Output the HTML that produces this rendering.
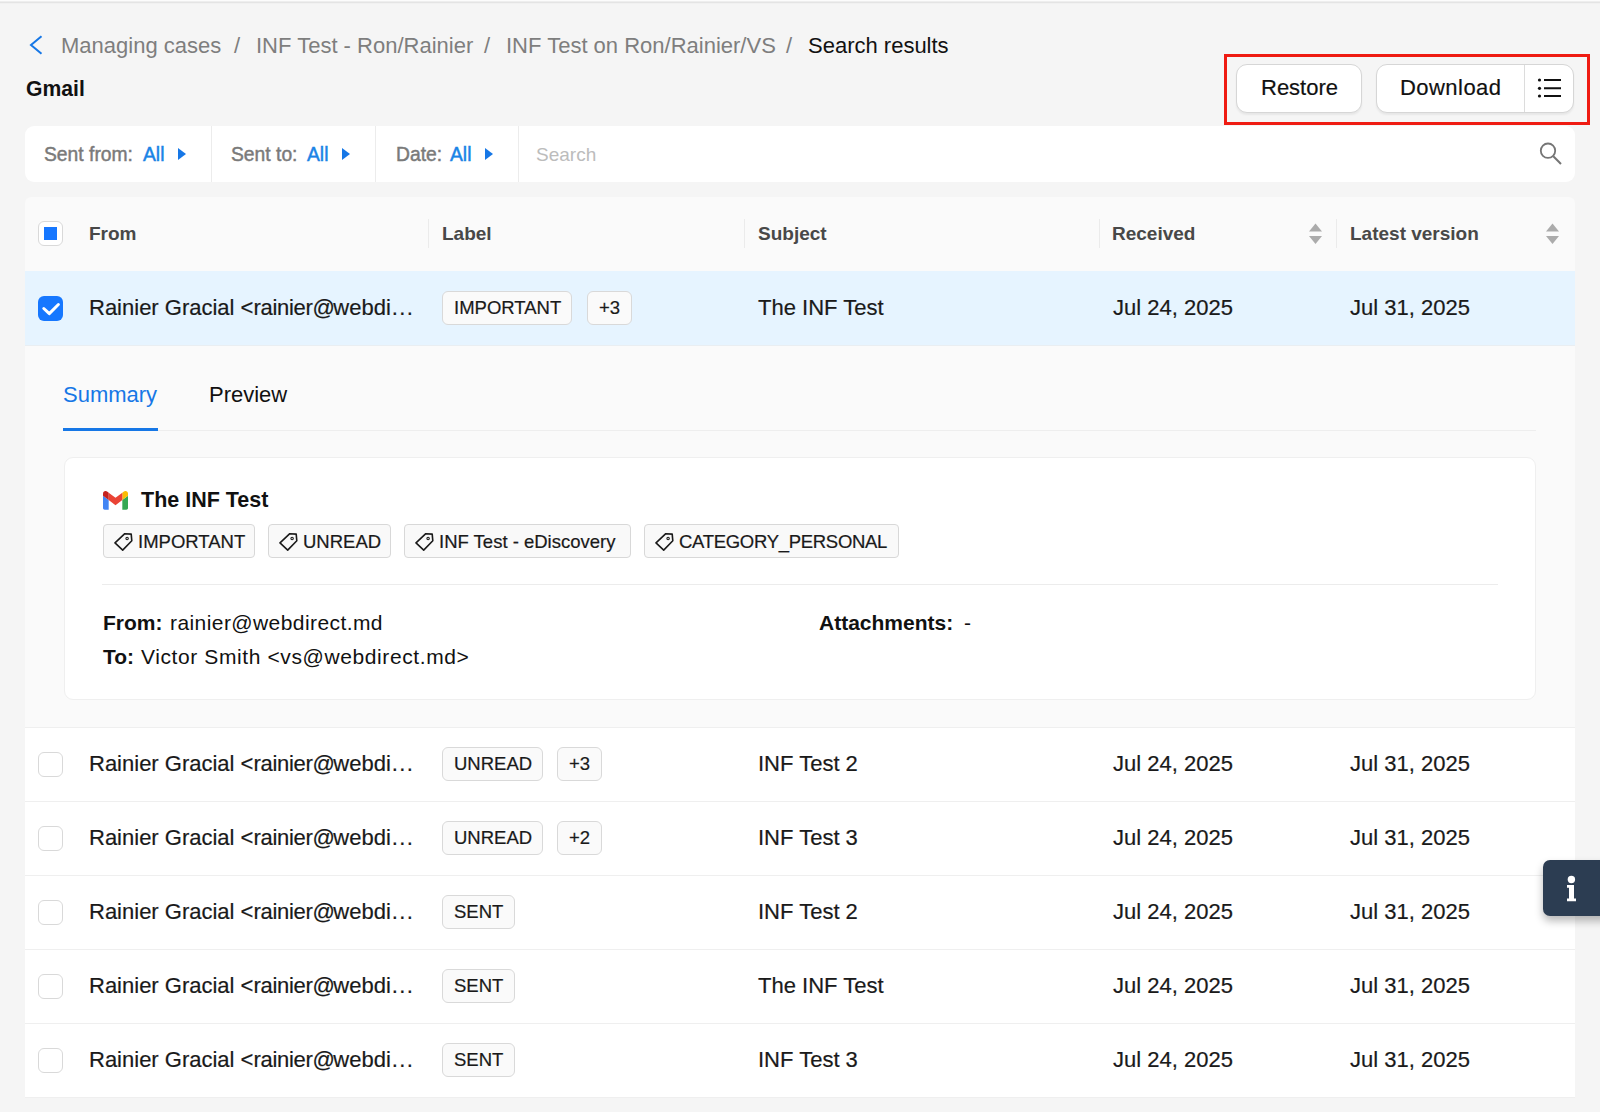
<!DOCTYPE html>
<html><head><meta charset="utf-8">
<style>
*{box-sizing:border-box;margin:0;padding:0}
html,body{width:1600px;height:1112px;overflow:hidden;background:#f5f5f5;font-family:"Liberation Sans",sans-serif;color:#1a1a1a}
.a{position:absolute;white-space:nowrap}
.topline{position:absolute;left:0;top:0;width:1600px;height:4px;background:linear-gradient(#fcfcfc 0,#fcfcfc 1px,#eeeeee 1px,#eeeeee 2px,#e4e4e4 2px,#e4e4e4 3px,#f1f1f1 3px,#f1f1f1 4px)}
.crumb{font-size:22px;line-height:22px;color:#7e7e7e}
.btn{position:absolute;background:#fff;border:1px solid #d6d6d6;border-radius:11px;box-shadow:0 2px 2px rgba(0,0,0,.06)}
.btxt{font-size:22px;line-height:22px;color:#111;-webkit-text-stroke:0.2px #111}
.redbox{position:absolute;left:1224px;top:54px;width:366px;height:71px;border:3px solid #ef1b12}
.filter{position:absolute;left:25px;top:126px;width:1550px;height:56px;background:#fff;border-radius:9px}
.fdiv{position:absolute;top:126px;width:1px;height:56px;background:#ececec}
.ftxt{font-size:19.3px;line-height:19.3px;color:#7a7a7a;-webkit-text-stroke:0.45px #7a7a7a}
.ftxt b{font-weight:normal;color:#1a84e6;-webkit-text-stroke:0.45px #1a84e6}
.tri{position:absolute;width:0;height:0;border-top:6px solid transparent;border-bottom:6px solid transparent;border-left:8px solid #1677e6}
.th{font-size:19px;line-height:19px;font-weight:bold;color:#484848}
.thdiv{position:absolute;top:219px;width:1px;height:29px;background:#ebebeb}
.rowbg{position:absolute;left:25px;width:1550px;background:#fff}
.rline{position:absolute;left:25px;width:1550px;height:1px;background:#efefef}
.cell{font-size:22px;line-height:22px;color:#1a1a1a;-webkit-text-stroke:0.2px #1a1a1a}
.tag{position:absolute;background:#fafafa;border:1px solid #d9d9d9;border-radius:6px;height:34px}
.tagt{font-size:18.5px;line-height:18.5px;color:#1a1a1a;-webkit-text-stroke:0.2px #1a1a1a}
.ctag{position:absolute;background:#f9f9f9;border:1px solid #d8d8d8;border-radius:4px;height:34px}
.cb{position:absolute;left:38px;width:25px;height:25px;border:1px solid #d9d9d9;border-radius:6px;background:#fff}
.sort{position:absolute;width:13px;height:21px}
</style></head>
<body>
<div class="topline"></div>
<svg class="a" style="left:28px;top:34px" width="16" height="22" viewBox="0 0 16 22"><path d="M13.5 2.2 L3 11 L13.5 19.8" fill="none" stroke="#1677e6" stroke-width="2"/></svg>
<div class="a crumb" style="left:61px;top:35.4px">Managing cases</div>
<div class="a crumb" style="left:234px;top:35.4px">/</div>
<div class="a crumb" style="left:256px;top:35.4px">INF Test - Ron/Rainier</div>
<div class="a crumb" style="left:484px;top:35.4px">/</div>
<div class="a crumb" style="left:506px;top:35.4px">INF Test on Ron/Rainier/VS</div>
<div class="a crumb" style="left:786px;top:35.4px">/</div>
<div class="a crumb" style="left:808px;top:35.4px;color:#111">Search results</div>
<div class="a" style="left:26px;top:77.7px;font-size:22.5px;line-height:22.5px;font-weight:bold;color:#111;transform:scaleX(0.94);transform-origin:0 0">Gmail</div>
<div class="btn" style="left:1236px;top:64px;width:126px;height:49px"></div>
<div class="a btxt" style="left:1261px;top:77.0px">Restore</div>
<div class="btn" style="left:1376px;top:64px;width:198px;height:49px"></div>
<div class="a" style="left:1524px;top:65px;width:1px;height:47px;background:#dcdcdc"></div>
<div class="a btxt" style="left:1400px;top:77.0px;letter-spacing:0.45px">Download</div>
<svg class="a" style="left:1536px;top:76px" width="28" height="24" viewBox="0 0 28 24"><circle cx="3.5" cy="4" r="1.6" fill="#111"/><circle cx="3.5" cy="12.3" r="1.6" fill="#111"/><circle cx="3.5" cy="20" r="1.6" fill="#111"/><path d="M8 4H25M8 12.3H25M8 20H25" stroke="#111" stroke-width="1.9"/></svg>
<div class="redbox"></div>
<div class="filter"></div>
<div class="fdiv" style="left:211px"></div>
<div class="fdiv" style="left:375px"></div>
<div class="fdiv" style="left:518px"></div>
<div class="a ftxt" style="left:44px;top:144.9px">Sent from:</div><div class="a ftxt" style="left:143px;top:144.9px"><b>All</b></div>
<div class="tri" style="left:178px;top:148px"></div>
<div class="a ftxt" style="left:231px;top:144.9px">Sent to:</div><div class="a ftxt" style="left:307px;top:144.9px"><b>All</b></div>
<div class="tri" style="left:342px;top:148px"></div>
<div class="a ftxt" style="left:396px;top:144.9px">Date:</div><div class="a ftxt" style="left:450px;top:144.9px"><b>All</b></div>
<div class="tri" style="left:485px;top:148px"></div>
<div class="a" style="left:536px;top:144.9px;font-size:19px;line-height:19px;color:#bcbcbc">Search</div>
<svg class="a" style="left:1536px;top:139px" width="28" height="28" viewBox="0 0 28 28"><circle cx="12" cy="11.7" r="7.2" fill="none" stroke="#757575" stroke-width="1.8"/><path d="M17.3 17.2 L25 25" stroke="#757575" stroke-width="2"/></svg>
<div class="a" style="left:25px;top:197px;width:1550px;height:74px;background:#fafafa;border-radius:6px 6px 0 0"></div>
<div class="cb" style="top:221px"></div>
<div class="a" style="left:44px;top:227px;width:13px;height:13px;background:#1677ff"></div>
<div class="a th" style="left:89px;top:224.4px">From</div>
<div class="a th" style="left:442px;top:224.4px">Label</div>
<div class="a th" style="left:758px;top:224.4px">Subject</div>
<div class="a th" style="left:1112px;top:224.4px">Received</div>
<div class="a th" style="left:1350px;top:224.4px">Latest version</div>
<div class="thdiv" style="left:428px"></div>
<div class="thdiv" style="left:744px"></div>
<div class="thdiv" style="left:1099px"></div>
<div class="thdiv" style="left:1336px"></div>
<svg class="sort" style="left:1309px;top:223px" viewBox="0 0 13 21"><path d="M0 8.5 L6.5 0.5 L13 8.5Z M0 13 L6.5 21 L13 13Z" fill="#ababab"/></svg>
<svg class="sort" style="left:1546px;top:223px" viewBox="0 0 13 21"><path d="M0 8.5 L6.5 0.5 L13 8.5Z M0 13 L6.5 21 L13 13Z" fill="#ababab"/></svg>
<div class="a" style="left:25px;top:271px;width:1550px;height:74px;background:#e6f4ff"></div>
<div class="a" style="left:38px;top:296px;width:25px;height:25px;background:#1677ff;border-radius:6px"></div>
<svg class="a" style="left:38px;top:296px" width="25" height="25" viewBox="0 0 25 25"><path d="M5.8 12.5 L11.3 17.6 L20.4 8.5" fill="none" stroke="#fff" stroke-width="3" stroke-linecap="round" stroke-linejoin="round"/></svg>
<div class="a cell" style="left:89px;top:297.4px">Rainier Gracial &lt;<span style="letter-spacing:-0.3px">rainier</span><span style="letter-spacing:-1.5px">@</span>webdi<span style="letter-spacing:1.4px;margin-left:1px">...</span></div>
<div class="tag" style="left:442px;top:291px;width:130px"></div>
<div class="a tagt" style="left:454px;top:298.9px">IMPORTANT</div>
<div class="tag" style="left:587px;top:291px;width:45px"></div>
<div class="a tagt" style="left:599px;top:298.9px">+3</div>
<div class="a cell" style="left:758px;top:297.4px">The INF Test</div>
<div class="a cell" style="left:1113px;top:297.4px">Jul 24, 2025</div>
<div class="a cell" style="left:1350px;top:297.4px">Jul 31, 2025</div>
<div class="a" style="left:25px;top:345px;width:1550px;height:382px;background:#fafafa"></div>
<div class="a" style="left:25px;top:345px;width:1550px;height:1px;background:#e9eef2"></div>
<div class="a" style="left:63px;top:383.9px;font-size:22px;line-height:22px;color:#1677e6">Summary</div>
<div class="a" style="left:209px;top:383.9px;font-size:22px;line-height:22px;color:#111">Preview</div>
<div class="a" style="left:63px;top:430px;width:1473px;height:1px;background:#eeeeee"></div>
<div class="a" style="left:63px;top:428px;width:95px;height:3px;background:#1677e6"></div>
<div class="a" style="left:64px;top:457px;width:1472px;height:243px;background:#fff;border:1px solid #efefef;border-radius:9px"></div>
<svg class="a" style="left:103px;top:491px" width="25" height="18.75" viewBox="52 42 88 66"><path fill="#4285f4" d="M58 108h14V74L52 59v43c0 3.32 2.69 6 6 6"/><path fill="#34a853" d="M120 108h14c3.32 0 6-2.69 6-6V59l-20 15"/><path fill="#fbbc04" d="M120 48v26l20-15v-8c0-7.42-8.47-11.65-14.4-7.2"/><path fill="#ea4335" d="M72 74V48l24 18 24-18v26L96 92"/><path fill="#c5221f" d="M52 51v8l20 15V48l-5.6-4.2c-5.94-4.45-14.4-.22-14.4 7.2"/></svg>
<div class="a" style="left:141px;top:490.3px;font-size:21.5px;line-height:21.5px;font-weight:bold;color:#111">The INF Test</div>
<div class="ctag" style="left:103px;top:524px;width:152px"><svg width="20" height="20" viewBox="0 0 20 20" style="position:absolute;left:10px;top:6px"><path d="M1 11.9 L10.8 2.7 L17.2 3.1 L17.8 9.8 L8.7 19.1 Z" fill="none" stroke="#1a1a1a" stroke-width="1.6" stroke-linejoin="round"/><circle cx="13.1" cy="7.5" r="1.2" fill="none" stroke="#1a1a1a" stroke-width="1.1"/></svg></div>
<div class="a tagt" style="left:138px;top:532.8px">IMPORTANT</div>
<div class="ctag" style="left:268px;top:524px;width:123px"><svg width="20" height="20" viewBox="0 0 20 20" style="position:absolute;left:10px;top:6px"><path d="M1 11.9 L10.8 2.7 L17.2 3.1 L17.8 9.8 L8.7 19.1 Z" fill="none" stroke="#1a1a1a" stroke-width="1.6" stroke-linejoin="round"/><circle cx="13.1" cy="7.5" r="1.2" fill="none" stroke="#1a1a1a" stroke-width="1.1"/></svg></div>
<div class="a tagt" style="left:303px;top:532.8px">UNREAD</div>
<div class="ctag" style="left:404px;top:524px;width:227px"><svg width="20" height="20" viewBox="0 0 20 20" style="position:absolute;left:10px;top:6px"><path d="M1 11.9 L10.8 2.7 L17.2 3.1 L17.8 9.8 L8.7 19.1 Z" fill="none" stroke="#1a1a1a" stroke-width="1.6" stroke-linejoin="round"/><circle cx="13.1" cy="7.5" r="1.2" fill="none" stroke="#1a1a1a" stroke-width="1.1"/></svg></div>
<div class="a tagt" style="left:439px;top:532.8px">INF Test - eDiscovery</div>
<div class="ctag" style="left:644px;top:524px;width:255px"><svg width="20" height="20" viewBox="0 0 20 20" style="position:absolute;left:10px;top:6px"><path d="M1 11.9 L10.8 2.7 L17.2 3.1 L17.8 9.8 L8.7 19.1 Z" fill="none" stroke="#1a1a1a" stroke-width="1.6" stroke-linejoin="round"/><circle cx="13.1" cy="7.5" r="1.2" fill="none" stroke="#1a1a1a" stroke-width="1.1"/></svg></div>
<div class="a tagt" style="left:679px;top:532.8px;letter-spacing:-0.3px">CATEGORY_PERSONAL</div>
<div class="a" style="left:102px;top:584px;width:1396px;height:1px;background:#ececec"></div>
<div class="a" style="left:103px;top:612.0px;font-size:21px;line-height:21px;color:#111"><b>From:</b></div>
<div class="a" style="left:170px;top:612.0px;font-size:21px;line-height:21px;color:#111;letter-spacing:0.42px">rainier@webdirect.md</div>
<div class="a" style="left:103px;top:646.2px;font-size:21px;line-height:21px;color:#111"><b>To:</b></div>
<div class="a" style="left:141px;top:646.2px;font-size:21px;line-height:21px;color:#111;letter-spacing:0.6px">Victor Smith &lt;vs@webdirect.md&gt;</div>
<div class="a" style="left:819px;top:612.0px;font-size:21px;line-height:21px;color:#111"><b>Attachments:</b></div>
<div class="a" style="left:964px;top:612.0px;font-size:21px;line-height:21px;color:#111">-</div>
<div class="rowbg" style="top:727px;height:74px"></div>
<div class="rline" style="top:727px"></div>
<div class="cb" style="top:752px"></div>
<div class="a cell" style="left:89px;top:753.4px">Rainier Gracial &lt;<span style="letter-spacing:-0.3px">rainier</span><span style="letter-spacing:-1.5px">@</span>webdi<span style="letter-spacing:1.4px;margin-left:1px">...</span></div>
<div class="tag" style="left:442px;top:747px;width:101px"></div>
<div class="a tagt" style="left:454px;top:754.9px">UNREAD</div>
<div class="tag" style="left:557px;top:747px;width:45px"></div>
<div class="a tagt" style="left:569px;top:754.9px">+3</div>
<div class="a cell" style="left:758px;top:753.4px">INF Test 2</div>
<div class="a cell" style="left:1113px;top:753.4px">Jul 24, 2025</div>
<div class="a cell" style="left:1350px;top:753.4px">Jul 31, 2025</div>
<div class="rowbg" style="top:801px;height:74px"></div>
<div class="rline" style="top:801px"></div>
<div class="cb" style="top:826px"></div>
<div class="a cell" style="left:89px;top:827.4px">Rainier Gracial &lt;<span style="letter-spacing:-0.3px">rainier</span><span style="letter-spacing:-1.5px">@</span>webdi<span style="letter-spacing:1.4px;margin-left:1px">...</span></div>
<div class="tag" style="left:442px;top:821px;width:101px"></div>
<div class="a tagt" style="left:454px;top:828.9px">UNREAD</div>
<div class="tag" style="left:557px;top:821px;width:45px"></div>
<div class="a tagt" style="left:569px;top:828.9px">+2</div>
<div class="a cell" style="left:758px;top:827.4px">INF Test 3</div>
<div class="a cell" style="left:1113px;top:827.4px">Jul 24, 2025</div>
<div class="a cell" style="left:1350px;top:827.4px">Jul 31, 2025</div>
<div class="rowbg" style="top:875px;height:74px"></div>
<div class="rline" style="top:875px"></div>
<div class="cb" style="top:900px"></div>
<div class="a cell" style="left:89px;top:901.4px">Rainier Gracial &lt;<span style="letter-spacing:-0.3px">rainier</span><span style="letter-spacing:-1.5px">@</span>webdi<span style="letter-spacing:1.4px;margin-left:1px">...</span></div>
<div class="tag" style="left:442px;top:895px;width:73px"></div>
<div class="a tagt" style="left:454px;top:902.9px">SENT</div>
<div class="a cell" style="left:758px;top:901.4px">INF Test 2</div>
<div class="a cell" style="left:1113px;top:901.4px">Jul 24, 2025</div>
<div class="a cell" style="left:1350px;top:901.4px">Jul 31, 2025</div>
<div class="rowbg" style="top:949px;height:74px"></div>
<div class="rline" style="top:949px"></div>
<div class="cb" style="top:974px"></div>
<div class="a cell" style="left:89px;top:975.4px">Rainier Gracial &lt;<span style="letter-spacing:-0.3px">rainier</span><span style="letter-spacing:-1.5px">@</span>webdi<span style="letter-spacing:1.4px;margin-left:1px">...</span></div>
<div class="tag" style="left:442px;top:969px;width:73px"></div>
<div class="a tagt" style="left:454px;top:976.9px">SENT</div>
<div class="a cell" style="left:758px;top:975.4px">The INF Test</div>
<div class="a cell" style="left:1113px;top:975.4px">Jul 24, 2025</div>
<div class="a cell" style="left:1350px;top:975.4px">Jul 31, 2025</div>
<div class="rowbg" style="top:1023px;height:74px"></div>
<div class="rline" style="top:1023px"></div>
<div class="cb" style="top:1048px"></div>
<div class="a cell" style="left:89px;top:1049.4px">Rainier Gracial &lt;<span style="letter-spacing:-0.3px">rainier</span><span style="letter-spacing:-1.5px">@</span>webdi<span style="letter-spacing:1.4px;margin-left:1px">...</span></div>
<div class="tag" style="left:442px;top:1043px;width:73px"></div>
<div class="a tagt" style="left:454px;top:1050.9px">SENT</div>
<div class="a cell" style="left:758px;top:1049.4px">INF Test 3</div>
<div class="a cell" style="left:1113px;top:1049.4px">Jul 24, 2025</div>
<div class="a cell" style="left:1350px;top:1049.4px">Jul 31, 2025</div>
<div class="rline" style="top:1097px"></div>
<div class="a" style="left:1543px;top:860px;width:70px;height:56px;background:#2c3d52;border-radius:7px;box-shadow:0 5px 8px rgba(0,0,0,.28)"></div>
<svg class="a" style="left:1562px;top:874px" width="20" height="30" viewBox="0 0 20 30"><circle cx="9.4" cy="5.5" r="3.7" fill="#fff"/><path d="M5 11 H12 V24.5 H14 V27.3 H5 V24.5 H7 V13.8 H5 Z" fill="#fff"/></svg>
</body></html>
